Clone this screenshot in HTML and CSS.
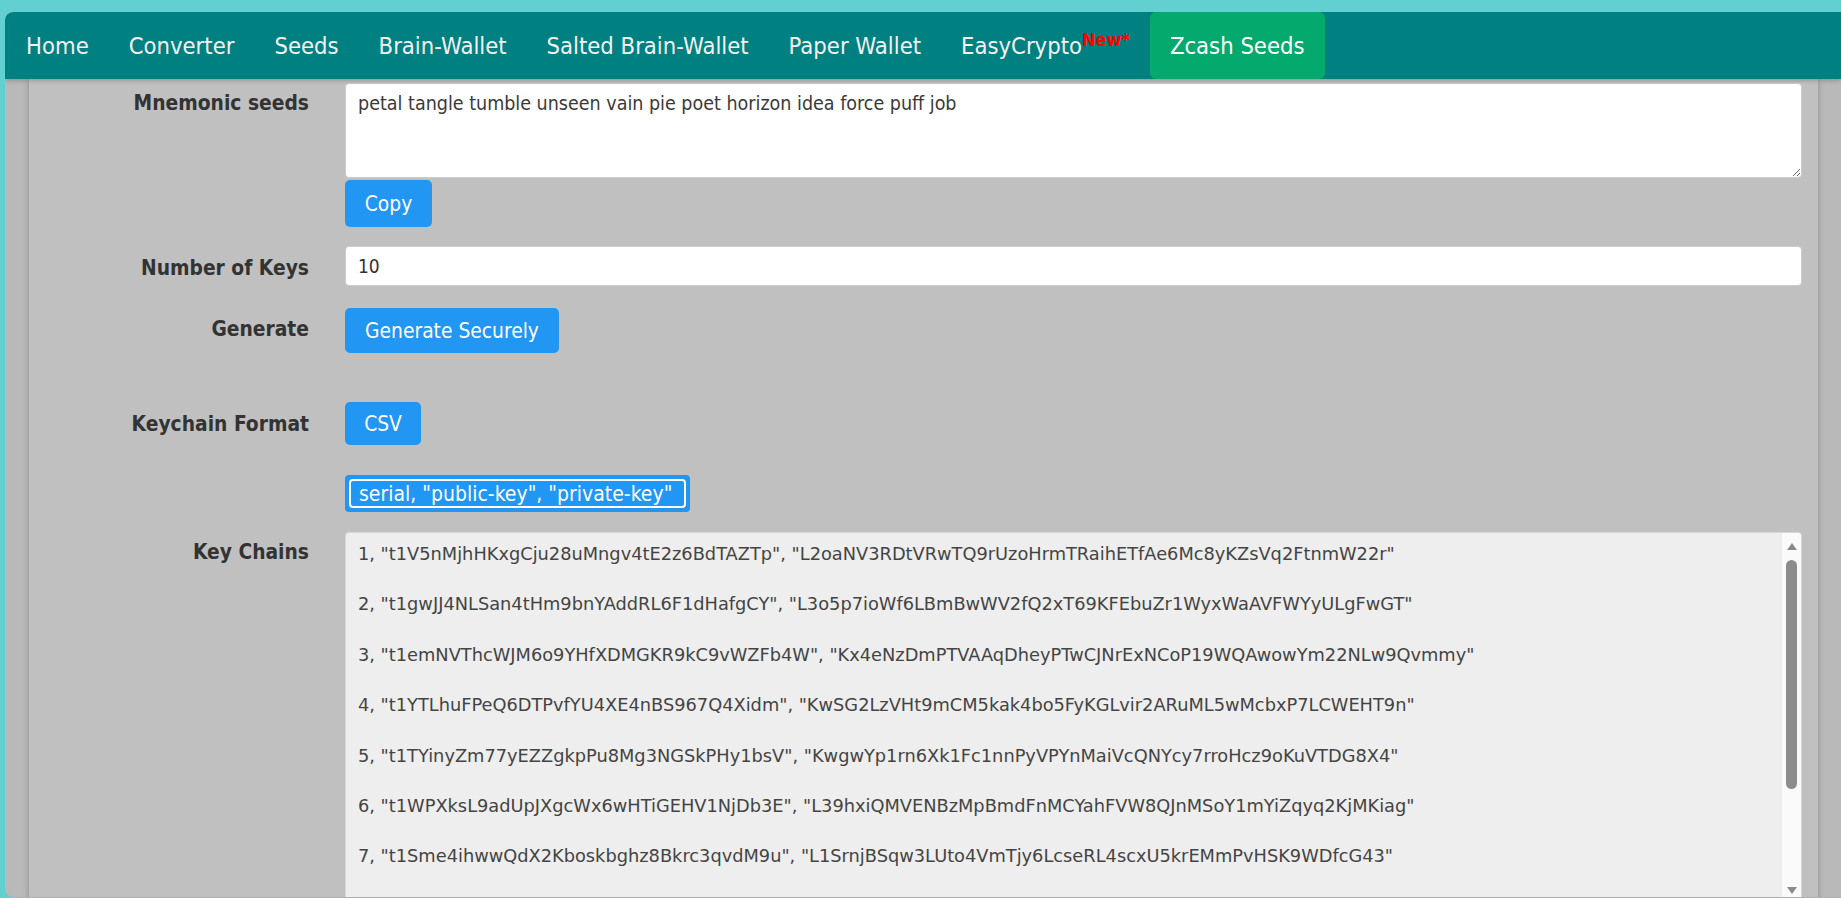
FILE: index.html
```html
<!DOCTYPE html>
<html lang="en">
  <head>
    <meta charset="UTF-8" />
    <meta name="viewport" content="width=device-width, initial-scale=1.0" />
    <title>Zcash Seeds</title>
    <link rel="stylesheet" href="styles.css">
  </head>

  <body>
    <div class="window">
      <nav class="topnav">
        <a href="#">Home</a>
        <a href="#">Converter</a>
        <a href="#">Seeds</a>
        <a href="#">Brain-Wallet</a>
        <a href="#">Salted Brain-Wallet</a>
        <a href="#">Paper Wallet</a>
        <a href="#">EasyCrypto<sup class="new">New*</sup></a>
        <a href="#" class="active">Zcash Seeds</a>
      </nav>

      <div class="frame">
        <section class="main">
          <div class="form-row row-seeds">
            <label class="form-label">Mnemonic seeds</label>
            <div class="form-field">
              <textarea class="seed-box">petal tangle tumble unseen vain pie poet horizon idea force puff job</textarea>
              <button class="btn btn-copy">Copy</button>
            </div>
          </div>

          <div class="form-row row-count">
            <label class="form-label">Number of Keys</label>
            <div class="form-field">
              <input type="text" class="text-input" value="10" />
            </div>
          </div>

          <div class="form-row row-generate">
            <label class="form-label">Generate</label>
            <div class="form-field">
              <button class="btn btn-generate">Generate Securely</button>
            </div>
          </div>

          <div class="form-row row-format">
            <label class="form-label">Keychain Format</label>
            <div class="form-field">
              <button class="btn btn-csv">CSV</button>
            </div>
          </div>

          <div class="form-row row-select">
            <span class="form-label"></span>
            <div class="form-field">
              <div class="format-select"><span>serial, "public-key", "private-key"</span></div>
            </div>
          </div>

          <div class="form-row row-keys">
            <label class="form-label">Key Chains</label>
            <div class="form-field">
              <div class="keychains">
                <div class="keys-text">1, "t1V5nMjhHKxgCju28uMngv4tE2z6BdTAZTp", "L2oaNV3RDtVRwTQ9rUzoHrmTRaihETfAe6Mc8yKZsVq2FtnmW22r"

2, "t1gwJJ4NLSan4tHm9bnYAddRL6F1dHafgCY", "L3o5p7ioWf6LBmBwWV2fQ2xT69KFEbuZr1WyxWaAVFWYyULgFwGT"

3, "t1emNVThcWJM6o9YHfXDMGKR9kC9vWZFb4W", "Kx4eNzDmPTVAAqDheyPTwCJNrExNCoP19WQAwowYm22NLw9Qvmmy"

4, "t1YTLhuFPeQ6DTPvfYU4XE4nBS967Q4Xidm", "KwSG2LzVHt9mCM5kak4bo5FyKGLvir2ARuML5wMcbxP7LCWEHT9n"

5, "t1TYinyZm77yEZZgkpPu8Mg3NGSkPHy1bsV", "KwgwYp1rn6Xk1Fc1nnPyVPYnMaiVcQNYcy7rroHcz9oKuVTDG8X4"

6, "t1WPXksL9adUpJXgcWx6wHTiGEHV1NjDb3E", "L39hxiQMVENBzMpBmdFnMCYahFVW8QJnMSoY1mYiZqyq2KjMKiag"

7, "t1Sme4ihwwQdX2Kboskbghz8Bkrc3qvdM9u", "L1SrnjBSqw3LUto4VmTjy6LcseRL4scxU5krEMmPvHSK9WDfcG43"</div>
                <div class="scrollbar">
                  <span class="arrow-up"></span>
                  <span class="thumb"></span>
                  <span class="arrow-down"></span>
                </div>
              </div>
            </div>
          </div>
        </section>
      </div>
    </div>
  </body>
</html>
```

FILE: styles.css
```css
body {
  margin: 0;
  padding: 0;
  height: 898px;
  overflow: hidden;
  background-color: #62d0d0;
  font-family: "DejaVu Sans Condensed", "DejaVu Sans", sans-serif;
}

.window {
  margin: 12px 0 0 5px;
  height: 885px;
  display: flex;
  flex-direction: column;
  border-radius: 8px 0 0 8px;
  overflow: hidden;
  background-color: #b9b9b9;
}

/* top navigation */
.topnav {
  display: flex;
  height: 67px;
  flex-shrink: 0;
  padding-left: 1px;
  background-color: #008080;
  border-radius: 8px 0 0 0;
  box-shadow: 0 2px 4px rgba(0, 0, 0, 0.2);
  position: relative;
  z-index: 1;
}

.topnav a {
  display: flex;
  align-items: center;
  padding: 0 20px;
  color: #f2f2f2;
  text-decoration: none;
  font-size: 23.6px;
}

.topnav a.active {
  background-color: #04aa6d;
  color: #fff;
  border-radius: 6px;
}

.topnav .new {
  align-self: flex-start;
  margin-top: 17px;
  color: #ff0000;
  font-size: 18px;
  font-weight: bold;
}

/* page body */
.frame {
  flex: 1;
  padding: 0 23px 0 24px;
  overflow: hidden;
}

.main {
  height: 100%;
  padding: 4px 16px 0 0;
  background-color: #c0c0c0;
  box-shadow: 0 0 6px rgba(0, 0, 0, 0.25);
}

.form-row {
  display: grid;
  grid-template-columns: 280px 1fr;
  column-gap: 36px;
  align-items: start;
}

.form-label {
  text-align: right;
  font-weight: bold;
  font-size: 20.8px;
  line-height: 24px;
  color: #333;
}

.form-field {
  display: flex;
  flex-direction: column;
  align-items: flex-start;
}

.row-seeds .form-label { padding-top: 8px; }
.row-count { margin-top: 19px; }
.row-count .form-label { padding-top: 10px; }
.row-generate { margin-top: 22px; }
.row-generate .form-label { padding-top: 9px; }
.row-format { margin-top: 49px; }
.row-format .form-label { padding-top: 10px; }
.row-select { margin-top: 30px; }
.row-keys { margin-top: 20px; }
.row-keys .form-label { padding-top: 8px; }

.seed-box {
  box-sizing: border-box;
  width: 100%;
  height: 95px;
  padding: 8px 12px;
  border: 1px solid #ccc;
  border-radius: 4px;
  background-color: #fff;
  color: #3a3a3a;
  font-family: "DejaVu Sans Condensed", "DejaVu Sans", sans-serif;
  font-size: 19.5px;
  line-height: 24px;
}

.text-input {
  box-sizing: border-box;
  width: 100%;
  height: 40px;
  padding: 0 12px;
  border: 1px solid #ccc;
  border-radius: 4px;
  background-color: #fff;
  color: #333;
  font-family: "DejaVu Sans Condensed", "DejaVu Sans", sans-serif;
  font-size: 19px;
}

.btn {
  border: none;
  border-radius: 5px;
  background-color: #2196f3;
  color: #fff;
  font-family: "DejaVu Sans Condensed", "DejaVu Sans", sans-serif;
  font-size: 20.8px;
  cursor: pointer;
}

.btn-copy {
  margin-top: 2px;
  width: 87px;
  height: 47px;
}

.btn-generate {
  width: 214px;
  height: 45px;
}

.btn-csv {
  width: 76px;
  height: 43px;
}

.format-select {
  box-sizing: border-box;
  width: 345px;
  height: 37px;
  padding: 4px;
  border-radius: 4px;
  background-color: #2196f3;
}

.format-select span {
  box-sizing: border-box;
  display: flex;
  align-items: center;
  height: 100%;
  padding: 0 8px;
  border: 2px solid #fff;
  border-radius: 4px;
  color: #fff;
  font-size: 21px;
  white-space: nowrap;
}

.keychains {
  box-sizing: border-box;
  display: flex;
  width: 100%;
  height: 420px;
  border: 1px solid #d6d6d6;
  border-radius: 4px;
  background-color: #eeeeee;
  overflow: hidden;
}

.keys-text {
  flex: 1;
  padding: 8px 12px;
  white-space: pre;
  overflow: hidden;
  color: #444;
  font-family: "DejaVu Sans", Verdana, sans-serif;
  font-size: 17.8px;
  line-height: 25.2px;
}

.scrollbar {
  width: 19px;
  display: flex;
  flex-direction: column;
  align-items: center;
  background-color: #fafafa;
}

.arrow-up,
.arrow-down {
  width: 0;
  height: 0;
  border-left: 5px solid transparent;
  border-right: 5px solid transparent;
}

.arrow-up {
  margin-top: 10px;
  border-bottom: 7px solid #8a8a8a;
}

.arrow-down {
  margin-top: 98px;
  border-top: 7px solid #8a8a8a;
}

.thumb {
  margin-top: 10px;
  width: 11px;
  height: 229px;
  border-radius: 6px;
  background-color: #8c8c8c;
}
```
